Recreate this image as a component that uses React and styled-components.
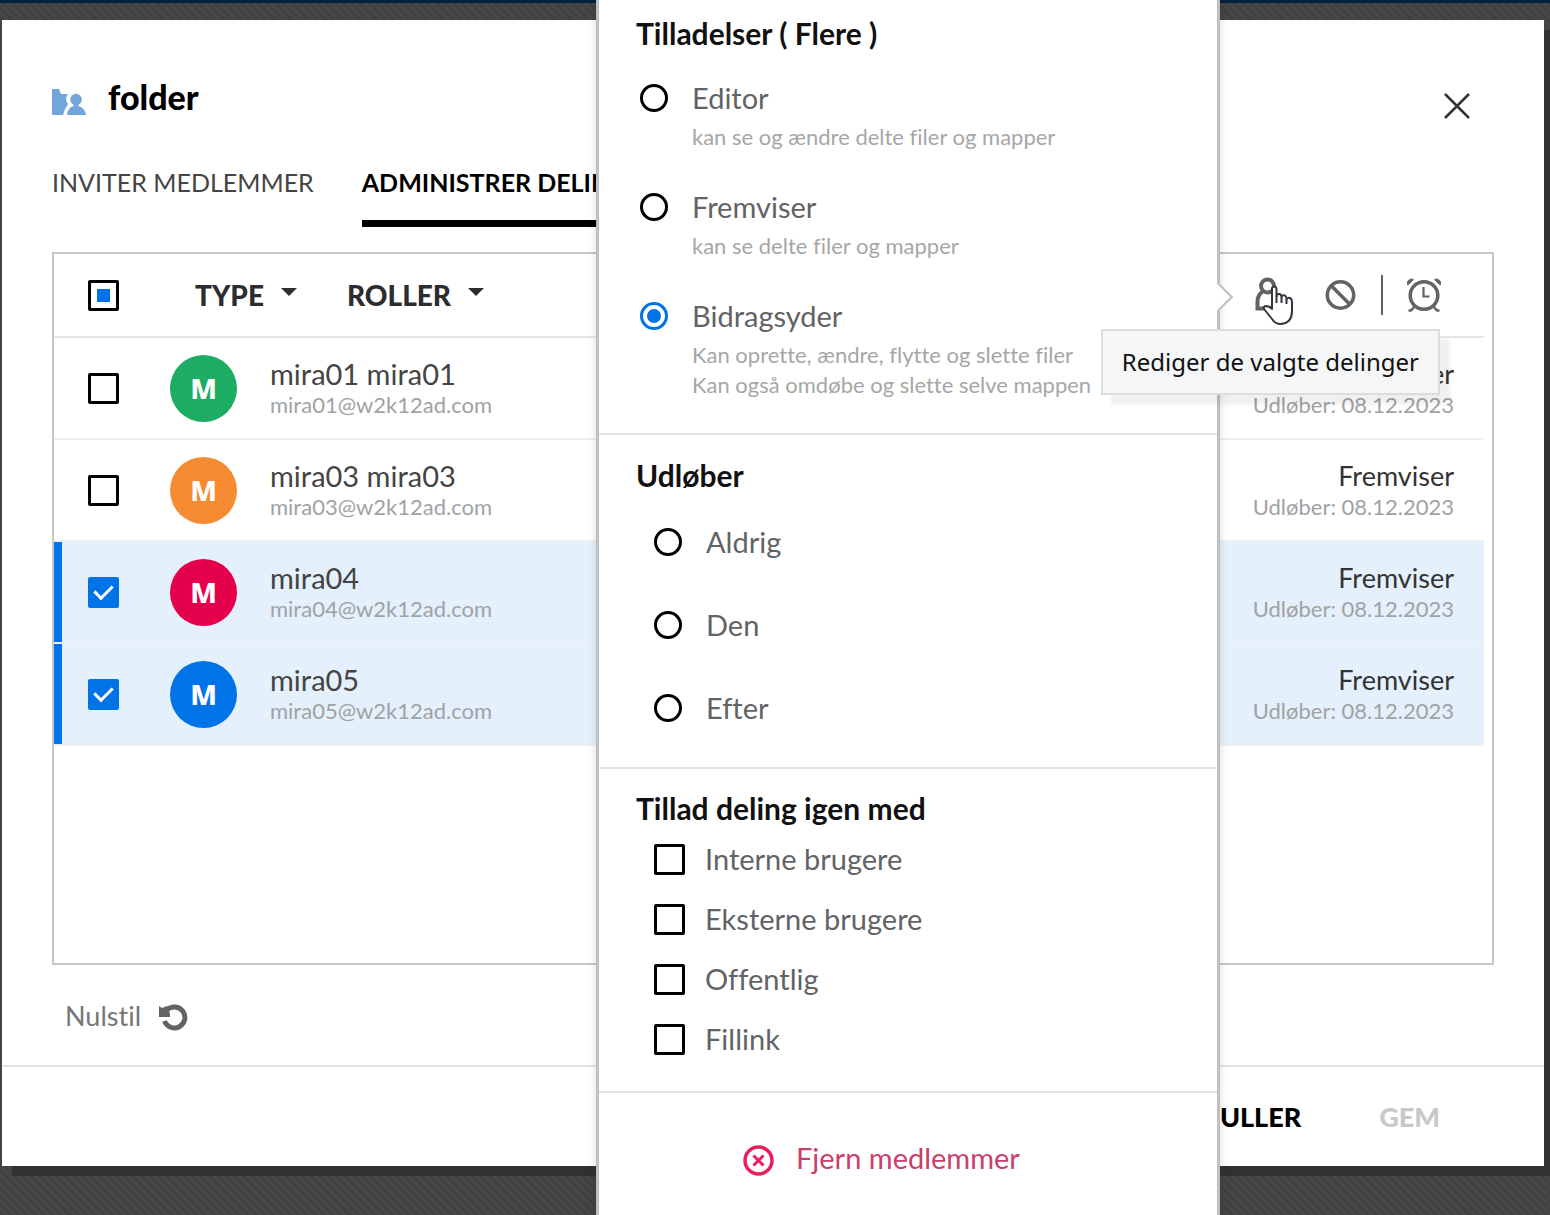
import React from "react";
import styled, { createGlobalStyle, css } from "styled-components";

const GlobalStyle = createGlobalStyle`
    * {
        box-sizing: border-box;
    }
    body {
        margin: 0;
        font-family: Lato, "Noto Sans", sans-serif;
        font-variant-ligatures: none;
        color: #444;
        background: repeating-linear-gradient(45deg, #414141 0 3px, #474747 3px 6px);
    }
    button {
        padding: 0;
        border: none;
        background: none;
        font-family: inherit;
        font-variant-ligatures: inherit;
        color: inherit;
        cursor: pointer;
    }
`;

const Page = styled.div`
    position: relative;
    min-height: 100vh;
    display: flex;
    flex-direction: column;
    overflow: hidden;
`;
const TopStrip = styled.div`
    height: 3px;
    background: #04203f;
`;
const Dialog = styled.main`
    flex: 1;
    display: flex;
    flex-direction: column;
    margin: 17px 6px 49px 2px;
    background: #fff;
    box-shadow: 10px 10px 0 #313131;
`;
const DialogHeader = styled.header`
    display: flex;
    justify-content: space-between;
    align-items: flex-start;
    padding: 58px 73px 0 50px;
`;
const TitleGroup = styled.div`
    display: flex;
    align-items: flex-end;
    gap: 22px;
`;
const Title = styled.h1`
    margin: 0;
    font-size: 34px;
    line-height: 38px;
    font-weight: 900;
    color: #000;
`;
const CloseButton = styled.button`
    display: flex;
    padding-top: 14px;
`;
const Tabs = styled.nav`
    display: flex;
    gap: 48px;
    padding: 44px 50px 0;
`;
const Tab = styled.button`
    height: 63px;
    padding-bottom: 20px;
    border-bottom: 7px solid ${props => (props.$active ? "#000" : "transparent")};
    font-size: 25px;
    line-height: 36px;
    font-weight: ${props => (props.$active ? 700 : 400)};
    color: ${props => (props.$active ? "#000" : "#444")};
    white-space: nowrap;
`;
const ListBox = styled.section`
    flex: 1;
    margin: 25px 50px 0;
    padding-right: 8px;
    border: 2px solid #c4c6c8;
`;
const Table = styled.table`
    width: 100%;
    border-collapse: separate;
    border-spacing: 0;
`;
const HeadCell = styled.th`
    height: 84px;
    padding: 0;
    border-bottom: 2px solid #e6e6e6;
    text-align: left;
    font-weight: 700;
`;
const Row = styled.tr`
    background: ${props => (props.$selected ? "#e4f0fc" : "#fff")};
    td:first-child {
        box-shadow: ${props => (props.$selected ? "inset 8px 0 0 #0073e7" : "none")};
    }
`;
const Cell = styled.td`
    height: 102px;
    padding: 0;
    border-bottom: 2px solid #eeeff0;
`;
const CheckCell = styled(Cell)`
    width: 116px;
    padding-left: 34px;
`;
const HeadCheckCell = styled(HeadCell)`
    width: 116px;
    padding-left: 34px;
`;
const AvatarCell = styled(Cell)`
    width: 100px;
`;
const NameCell = styled(Cell)`
    padding-top: 2px;
`;
const RoleCell = styled(Cell)`
    padding: 2px 30px 0 0;
    text-align: right;
`;
const controlBase = css`
    appearance: none;
    flex: none;
    display: grid;
    place-content: center;
    margin: 0;
    border: 3px solid #000;
    background: #fff;
`;
const Checkbox = styled.input.attrs({ type: "checkbox" })`
    ${controlBase}
    width: 31px;
    height: 31px;
    border-radius: 2px;
    &:indeterminate::after {
        content: "";
        width: 13px;
        height: 13px;
        background: #0073e7;
    }
    &:checked {
        border-color: #0073e7;
        background: #0073e7;
    }
    &:checked::after {
        content: "";
        width: 8px;
        height: 15px;
        margin-bottom: 4px;
        border: solid #fff;
        border-width: 0 3px 3px 0;
        transform: rotate(45deg);
    }
`;
const Radio = styled.input.attrs({ type: "radio" })`
    ${controlBase}
    width: 28px;
    height: 28px;
    border-radius: 50%;
    &:checked {
        border-color: #0073e7;
    }
    &:checked::after {
        content: "";
        width: 14px;
        height: 14px;
        border-radius: 50%;
        background: #0073e7;
    }
`;
const Filters = styled.div`
    display: flex;
    gap: 50px;
    padding-left: 25px;
`;
const FilterButton = styled.button`
    display: flex;
    align-items: center;
    gap: 17px;
    font-size: 28px;
    line-height: 36px;
    font-weight: 900;
    color: #2b2d30;
    &::after {
        content: "";
        border: 8px solid transparent;
        border-top-color: #2b2d30;
        border-bottom: none;
        margin-bottom: 6px;
    }
`;
const Tools = styled.div`
    display: flex;
    justify-content: flex-end;
    align-items: center;
    gap: 24px;
    padding-right: 43px;
`;
const ToolButton = styled.button`
    position: relative;
    display: flex;
    color: #616365;
    &:first-child {
        margin-right: 12px;
    }
`;
const ToolDivider = styled.span`
    width: 2px;
    height: 40px;
    background: #616365;
`;
const Avatar = styled.div`
    width: 67px;
    height: 67px;
    display: flex;
    align-items: center;
    justify-content: center;
    border-radius: 50%;
    background: ${props => props.$color};
    color: #fff;
    font-family: "Noto Sans", sans-serif;
    font-size: 28px;
    font-weight: 800;
`;
const Name = styled.div`
    font-size: 29px;
    line-height: 32px;
    color: #444;
`;
const Role = styled.div`
    font-size: 27px;
    line-height: 32px;
    color: #333;
`;
const Sub = styled.div`
    font-size: 22px;
    line-height: 30px;
    color: #a0a2a4;
`;
const ResetButton = styled.button`
    align-self: flex-start;
    display: flex;
    align-items: center;
    gap: 18px;
    margin: 32px 63px 30px;
    font-size: 27px;
    line-height: 38px;
    color: #777;
`;
const DialogFooter = styled.footer`
    display: flex;
    justify-content: flex-end;
    align-items: center;
    gap: 78px;
    height: 101px;
    padding-right: 104px;
    border-top: 2px solid #e3e3e3;
`;
const FooterButton = styled.button`
    font-size: 27px;
    line-height: 36px;
    font-weight: 900;
    color: ${props => (props.disabled ? "#c8c8c8" : "#000")};
`;

const Popover = styled.aside`
    position: absolute;
    top: 0;
    bottom: 0;
    right: 330px;
    width: 624px;
    border: solid #bfc0c2;
    border-width: 0 3px;
    background: #fff;
    box-shadow: 0 0 8px rgba(0, 0, 0, 0.15);
`;
const PopoverArrow = styled.span`
    position: absolute;
    top: 287px;
    right: -12px;
    width: 20px;
    height: 20px;
    border: solid #bfc0c2;
    border-width: 2px 2px 0 0;
    background: #fff;
    transform: rotate(45deg);
`;
const Group = styled.fieldset`
    margin: 0;
    border: none;
    border-bottom: 2px solid #e4e4e4;
    padding: ${props => props.$pad};
`;
const GroupTitle = styled.legend`
    float: left;
    width: 100%;
    padding: 0;
    font-size: 30px;
    line-height: 36px;
    font-weight: 700;
    color: #111;
`;
const Options = styled.div`
    clear: both;
    display: flex;
    flex-direction: column;
    gap: ${props => props.$gap}px;
    padding: ${props => props.$top}px 0 0 ${props => props.$indent}px;
`;
const Option = styled.label`
    display: flex;
    align-items: center;
    gap: ${props => props.$gap}px;
    font-size: 29px;
    line-height: 36px;
    color: #616365;
`;
const OptionNote = styled.div`
    padding: 6px 0 0 52px;
    font-size: 22px;
    line-height: 30px;
    color: #a6a6a6;
`;
const RemoveButton = styled.button`
    display: flex;
    align-items: center;
    gap: 22px;
    margin: 46px 0 0 144px;
    font-size: 29px;
    line-height: 36px;
    color: #c9406c;
    svg {
        margin-top: 6px;
    }
`;
const Tooltip = styled.div`
    position: absolute;
    top: 329px;
    right: 110px;
    padding: 13px 19px;
    border: 2px solid #dcdddf;
    background: #f5f6f8;
    box-shadow: 10px 10px 4px rgba(0, 0, 0, 0.06);
    font-family: "Noto Sans", sans-serif;
    font-size: 24px;
    line-height: 36px;
    color: #111;
`;
const Pointer = styled.svg`
    position: absolute;
    top: 8px;
    left: 7px;
`;

const FolderIcon = () => (
    <svg width="34" height="28" viewBox="0 0 34 28" fill="#73a5db" aria-hidden="true">
        <path d="M0 2 Q0 1 1 1 H7 L9 6 H16 Q14 8 14 11 Q14 13 16 16 Q13 20 11 27 H1 Q0 27 0 26 Z" />
        <circle cx="24" cy="11.500" r="5.800" />
        <path d="M21.500 15 H26.500 V18 Q33 20 34 27 H15 Q15.500 20 21.500 18 Z" />
    </svg>
);
const CloseIcon = () => (
    <svg width="28" height="28" viewBox="0 0 28 28" stroke="#333" strokeWidth="2.500" aria-hidden="true">
        <path d="M2 2 L26 26 M26 2 L2 26" />
    </svg>
);
const PersonIcon = () => (
    <svg width="34" height="36" viewBox="0 0 34 36" fill="none" stroke="currentColor" strokeWidth="4" aria-hidden="true">
        <circle cx="12.500" cy="9" r="6.500" />
        <path d="M8.500 14 Q2.500 17 2.500 25 V31.500 H23 V25 Q23 18 17 14" />
    </svg>
);
const BlockIcon = () => (
    <svg width="32" height="32" viewBox="0 0 32 32" fill="none" stroke="currentColor" strokeWidth="3.500" aria-hidden="true">
        <circle cx="15.500" cy="16" r="13.200" />
        <path d="M6.500 7 L24.500 25" />
    </svg>
);
const AlarmIcon = () => (
    <svg width="34" height="34" viewBox="0 0 34 34" fill="none" stroke="currentColor" aria-hidden="true">
        <circle cx="17" cy="17.500" r="13.800" strokeWidth="3.500" />
        <path d="M16.500 9 V18.500 H22.500" strokeWidth="2.200" />
        <path d="M0 6.500 Q0 1 6 1 L6 2 L1.500 6.500 Z M34 6.500 Q34 1 28 1 L28 2 L32.500 6.500 Z" fill="currentColor" strokeWidth="1" />
        <path d="M8 28 L4 32.500 H1.500 M26 28 L30 32.500 H32.500" strokeWidth="2.500" />
    </svg>
);
const ResetIcon = () => (
    <svg width="30" height="30" viewBox="0 0 30 30" fill="none" stroke="#616365" aria-hidden="true">
        <path d="M8 9 A10.500 10.500 0 1 1 5.500 20" strokeWidth="5" />
        <path d="M0 5 L3 7 L8 5 L11 13 L11 16 H0 Z" fill="#616365" stroke="none" />
    </svg>
);
const RemoveIcon = () => (
    <svg width="31" height="31" viewBox="0 0 31 31" fill="none" stroke="#e91e5a" strokeWidth="3.500" aria-hidden="true">
        <circle cx="15.500" cy="15.500" r="13.500" />
        <path d="M10.500 10.500 L20.500 20.500 M20.500 10.500 L10.500 20.500" strokeWidth="3" />
    </svg>
);
const HandPointer = () => (
    <Pointer width="32" height="42" viewBox="0 0 32 42" fill="#fff" stroke="#34363c" strokeWidth="2" strokeLinejoin="round" aria-hidden="true">
        <path d="M10 24 V4 Q10 1.500 12 1.500 Q14.500 1.500 14.500 4 V11 Q15 8.500 17.500 9 Q19.500 9.500 19.500 12 Q20.500 9.500 23 10.500 Q24.500 11.500 24.500 14 Q26 12 28 13 Q30 14 30 16.500 V26 Q30 38 19 39 Q13 39 10 34 L2 24 Q1 21 4.500 21 Q8 21.500 10 24 Z" />
        <path d="M14.500 11 V18 M19.500 12 V18 M24.500 14 V19" />
    </Pointer>
);

const members = [
    { name: "mira01 mira01", email: "mira01@w2k12ad.com", color: "#1cac64" },
    { name: "mira03 mira03", email: "mira03@w2k12ad.com", color: "#f68b32" },
    { name: "mira04", email: "mira04@w2k12ad.com", color: "#e5004c", selected: true },
    { name: "mira05", email: "mira05@w2k12ad.com", color: "#0073e7", selected: true },
];

const permissions = [
    { label: "Editor", notes: ["kan se og ændre delte filer og mapper"] },
    { label: "Fremviser", notes: ["kan se delte filer og mapper"] },
    {
        label: "Bidragsyder",
        notes: ["Kan oprette, ændre, flytte og slette filer", "Kan også omdøbe og slette selve mappen"],
        checked: true,
    },
];
const expiries = ["Aldrig", "Den", "Efter"];
const reshares = ["Interne brugere", "Eksterne brugere", "Offentlig", "Fillink"];

const setPartial = el => {
    if (el) el.indeterminate = true;
};

const MemberTable = () => (
    <Table>
        <thead>
            <tr>
                <HeadCheckCell>
                    <Checkbox ref={setPartial} aria-label="Vælg alle" />
                </HeadCheckCell>
                <HeadCell colSpan={2}>
                    <Filters>
                        <FilterButton>TYPE</FilterButton>
                        <FilterButton>ROLLER</FilterButton>
                    </Filters>
                </HeadCell>
                <HeadCell>
                    <Tools>
                        <ToolButton aria-label="Rediger de valgte delinger">
                            <PersonIcon />
                            <HandPointer />
                        </ToolButton>
                        <ToolButton aria-label="Fjern"><BlockIcon /></ToolButton>
                        <ToolDivider />
                        <ToolButton aria-label="Udløber"><AlarmIcon /></ToolButton>
                    </Tools>
                </HeadCell>
            </tr>
        </thead>
        <tbody>
            {members.map(member => (
                <Row key={member.name} $selected={member.selected}>
                    <CheckCell>
                        <Checkbox defaultChecked={member.selected} aria-label={member.name} />
                    </CheckCell>
                    <AvatarCell>
                        <Avatar $color={member.color}>M</Avatar>
                    </AvatarCell>
                    <NameCell>
                        <Name>{member.name}</Name>
                        <Sub>{member.email}</Sub>
                    </NameCell>
                    <RoleCell>
                        <Role>Fremviser</Role>
                        <Sub>Udløber: 08.12.2023</Sub>
                    </RoleCell>
                </Row>
            ))}
        </tbody>
    </Table>
);

const PermissionPopover = () => (
    <Popover>
        <PopoverArrow />
        <Group $pad="15px 20px 33px 37px">
            <GroupTitle>Tilladelser ( Flere )</GroupTitle>
            <Options $top={29} $gap={37} $indent={4}>
                {permissions.map(item => (
                    <div key={item.label}>
                        <Option $gap={24}>
                            <Radio name="permission" defaultChecked={item.checked} />
                            {item.label}
                        </Option>
                        <OptionNote>
                            {item.notes.map(note => <div key={note}>{note}</div>)}
                        </OptionNote>
                    </div>
                ))}
            </Options>
        </Group>
        <Group $pad="22px 20px 41px 37px">
            <GroupTitle>Udløber</GroupTitle>
            <Options $top={31} $gap={47} $indent={18}>
                {expiries.map(label => (
                    <Option key={label} $gap={24}>
                        <Radio name="expiry" />
                        {label}
                    </Option>
                ))}
            </Options>
        </Group>
        <Group $pad="21px 20px 34px 37px">
            <GroupTitle>Tillad deling igen med</GroupTitle>
            <Options $top={15} $gap={24} $indent={18}>
                {reshares.map(label => (
                    <Option key={label} $gap={20}>
                        <Checkbox />
                        {label}
                    </Option>
                ))}
            </Options>
        </Group>
        <RemoveButton>
            <RemoveIcon />
            Fjern medlemmer
        </RemoveButton>
    </Popover>
);

export default () => (
    <Page>
        <GlobalStyle />
        <TopStrip />
        <Dialog>
            <DialogHeader>
                <TitleGroup>
                    <FolderIcon />
                    <Title>folder</Title>
                </TitleGroup>
                <CloseButton aria-label="Luk"><CloseIcon /></CloseButton>
            </DialogHeader>
            <Tabs>
                <Tab>INVITER MEDLEMMER</Tab>
                <Tab $active>ADMINISTRER DELINGER</Tab>
            </Tabs>
            <ListBox>
                <MemberTable />
            </ListBox>
            <ResetButton>
                Nulstil
                <ResetIcon />
            </ResetButton>
            <DialogFooter>
                <FooterButton>ANNULLER</FooterButton>
                <FooterButton disabled>GEM</FooterButton>
            </DialogFooter>
        </Dialog>
        <PermissionPopover />
        <Tooltip role="tooltip">Rediger de valgte delinger</Tooltip>
    </Page>
);
